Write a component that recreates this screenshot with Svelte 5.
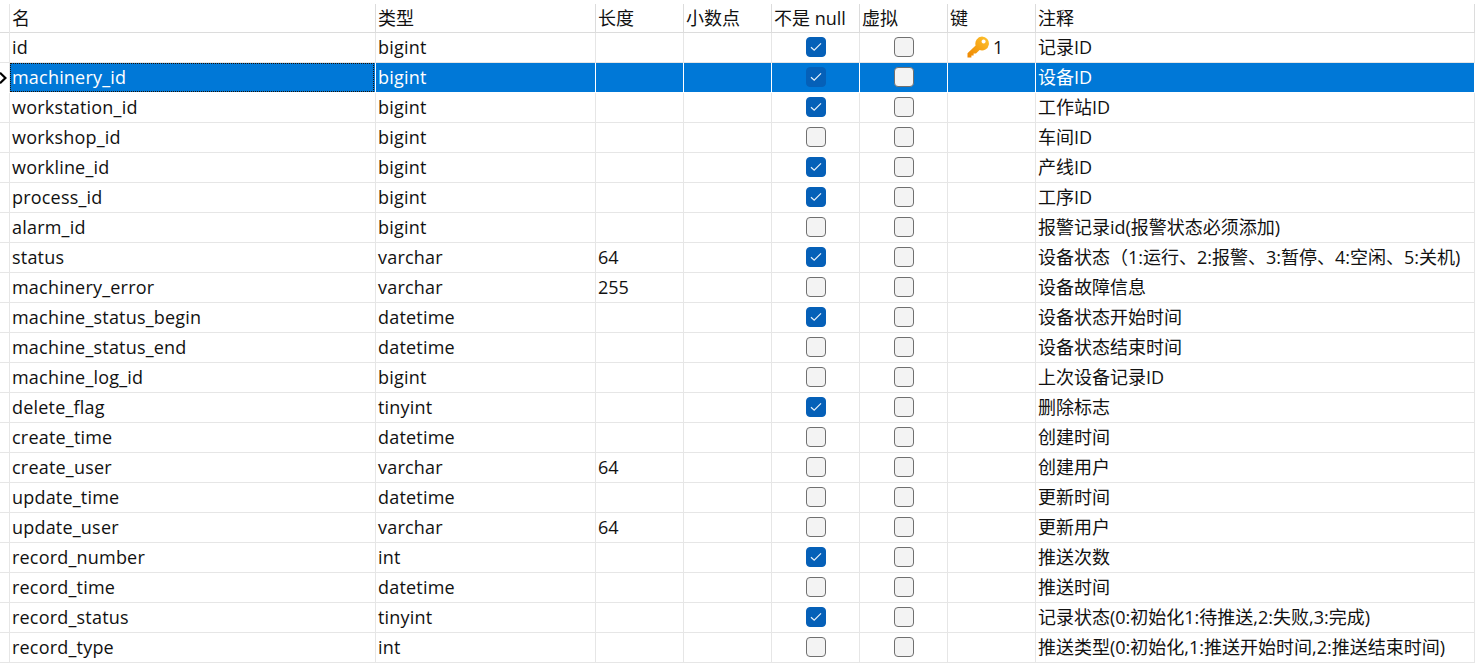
<script>
  const columns = ["名", "类型", "长度", "小数点", "不是 null", "虚拟", "键", "注释"];

  const rows = [
    { name: "id", type: "bigint", len: "", notNull: true, pk: "1", comment: "记录ID" },
    { name: "machinery_id", type: "bigint", len: "", notNull: true, comment: "设备ID" },
    { name: "workstation_id", type: "bigint", len: "", notNull: true, comment: "工作站ID" },
    { name: "workshop_id", type: "bigint", len: "", notNull: false, comment: "车间ID" },
    { name: "workline_id", type: "bigint", len: "", notNull: true, comment: "产线ID" },
    { name: "process_id", type: "bigint", len: "", notNull: true, comment: "工序ID" },
    { name: "alarm_id", type: "bigint", len: "", notNull: false, comment: "报警记录id(报警状态必须添加)" },
    { name: "status", type: "varchar", len: "64", notNull: true, comment: "设备状态（1:运行、2:报警、3:暂停、4:空闲、5:关机)" },
    { name: "machinery_error", type: "varchar", len: "255", notNull: false, comment: "设备故障信息" },
    { name: "machine_status_begin", type: "datetime", len: "", notNull: true, comment: "设备状态开始时间" },
    { name: "machine_status_end", type: "datetime", len: "", notNull: false, comment: "设备状态结束时间" },
    { name: "machine_log_id", type: "bigint", len: "", notNull: false, comment: "上次设备记录ID" },
    { name: "delete_flag", type: "tinyint", len: "", notNull: true, comment: "删除标志" },
    { name: "create_time", type: "datetime", len: "", notNull: false, comment: "创建时间" },
    { name: "create_user", type: "varchar", len: "64", notNull: false, comment: "创建用户" },
    { name: "update_time", type: "datetime", len: "", notNull: false, comment: "更新时间" },
    { name: "update_user", type: "varchar", len: "64", notNull: false, comment: "更新用户" },
    { name: "record_number", type: "int", len: "", notNull: true, comment: "推送次数" },
    { name: "record_time", type: "datetime", len: "", notNull: false, comment: "推送时间" },
    { name: "record_status", type: "tinyint", len: "", notNull: true, comment: "记录状态(0:初始化1:待推送,2:失败,3:完成)" },
    { name: "record_type", type: "int", len: "", notNull: false, comment: "推送类型(0:初始化,1:推送开始时间,2:推送结束时间)" },
  ];

  const selectedIndex = 1;
</script>

{#snippet checkbox(checked)}
  <span class="check" class:checked>
    {#if checked}
      <svg width="12" height="10" viewBox="0 0 12 10">
        <path d="M1 5.2 L4.2 8.2 L11 1.4" fill="none" stroke="#e8f1fa" stroke-width="1.2" />
      </svg>
    {/if}
  </span>
{/snippet}

<div class="grid">
  <div class="row head">
    <div class="marker"></div>
    {#each columns as col}
      <div class="cell">{col}</div>
    {/each}
  </div>

  {#each rows as row, i}
    <div class="row" class:selected={i === selectedIndex}>
      <div class="marker">
        {#if i === selectedIndex}
          <svg width="9" height="14" viewBox="0 0 9 14">
            <path d="M0 1.8 L5.4 7 L0 12.2" fill="#fff" stroke="#000" stroke-width="2.2" />
          </svg>
        {/if}
      </div>
      <div class="cell name"><span class="focus">{row.name}</span></div>
      <div class="cell latin">{row.type}</div>
      <div class="cell">{row.len}</div>
      <div class="cell"></div>
      <div class="cell center">{@render checkbox(row.notNull)}</div>
      <div class="cell center">{@render checkbox(false)}</div>
      <div class="cell key">
        {#if row.pk}
          <svg width="23" height="22" viewBox="0 0 23 22">
            <defs>
              <linearGradient id="keyGrad" x1="0" y1="1" x2="1" y2="0">
                <stop offset="0" stop-color="#ee8600" />
                <stop offset="1" stop-color="#ffc42e" />
              </linearGradient>
            </defs>
            <path
              fill="url(#keyGrad)"
              fill-rule="evenodd"
              d="M15 0.5 a7 7 0 1 1 -2.4 13.6 L9 17.5 H6.6 V19.6 H4.4 V21.5 H0.5 V17.2 L8.6 9.4 A7 7 0 0 1 15 0.5 Z M16.6 3.4 a2 2 0 1 0 0.01 0 Z"
            />
          </svg>
          <span>{row.pk}</span>
        {/if}
      </div>
      <div class="cell comment">{row.comment}</div>
    </div>
  {/each}
</div>

<style>
  :global(body) {
    margin: 0;
    background: #fff;
  }

  .grid {
    font-family: "Open Sans", "Noto Sans CJK SC", sans-serif;
    font-size: 18px;
    color: #111;
    width: 1475px;
    height: 672px;
    overflow: hidden;
  }

  .row {
    display: grid;
    grid-template-columns: 10px 366px 220px 88px 88px 88px 88px 88px 439px;
    height: 30px;
    box-sizing: border-box;
    border-bottom: 1px solid #e6e6e6;
  }

  .head {
    height: 33px;
    padding-top: 4px;
    border-bottom: 1px solid #dcdcdc;
  }

  .cell {
    box-sizing: border-box;
    display: flex;
    align-items: center;
    padding-left: 2px;
    padding-bottom: 1px;
    border-right: 1px solid #e6e6e6;
    white-space: nowrap;
    min-width: 0;
  }

  .head .cell {
    border-right-color: #dcdcdc;
    padding-bottom: 3px;
    padding-left: 2px;
  }

  .marker {
    display: flex;
    align-items: center;
    border-right: 1px solid #e6e6e6;
  }

  .center {
    justify-content: center;
    padding-left: 0;
  }

  .key {
    gap: 3px;
    padding-left: 19px;
  }

  .comment {
    padding-bottom: 3px;
  }

  .latin,
  .focus {
    letter-spacing: 0.2px;
  }

  .selected {
    border-bottom-color: #fff;
  }

  .selected .cell {
    background: #0078d7;
    color: #fff;
    border-right-color: #fff;
  }

  .name {
    padding-left: 0;
  }

  .focus {
    flex: 1;
    align-self: stretch;
    display: flex;
    align-items: center;
    padding-left: 2px;
  }

  .selected .name {
    padding: 0 1px 0 0;
  }

  .selected .focus {
    border: 1px dotted #221100;
    padding-left: 1px;
    padding-bottom: 1px;
  }

  .check {
    box-sizing: border-box;
    width: 20px;
    height: 20px;
    border-radius: 4px;
    background: #f3f3f3;
    border: 1px solid #707070;
    display: flex;
    align-items: center;
    justify-content: center;
  }

  .check.checked {
    background: #0560b8;
    border-color: #0560b8;
  }
</style>
